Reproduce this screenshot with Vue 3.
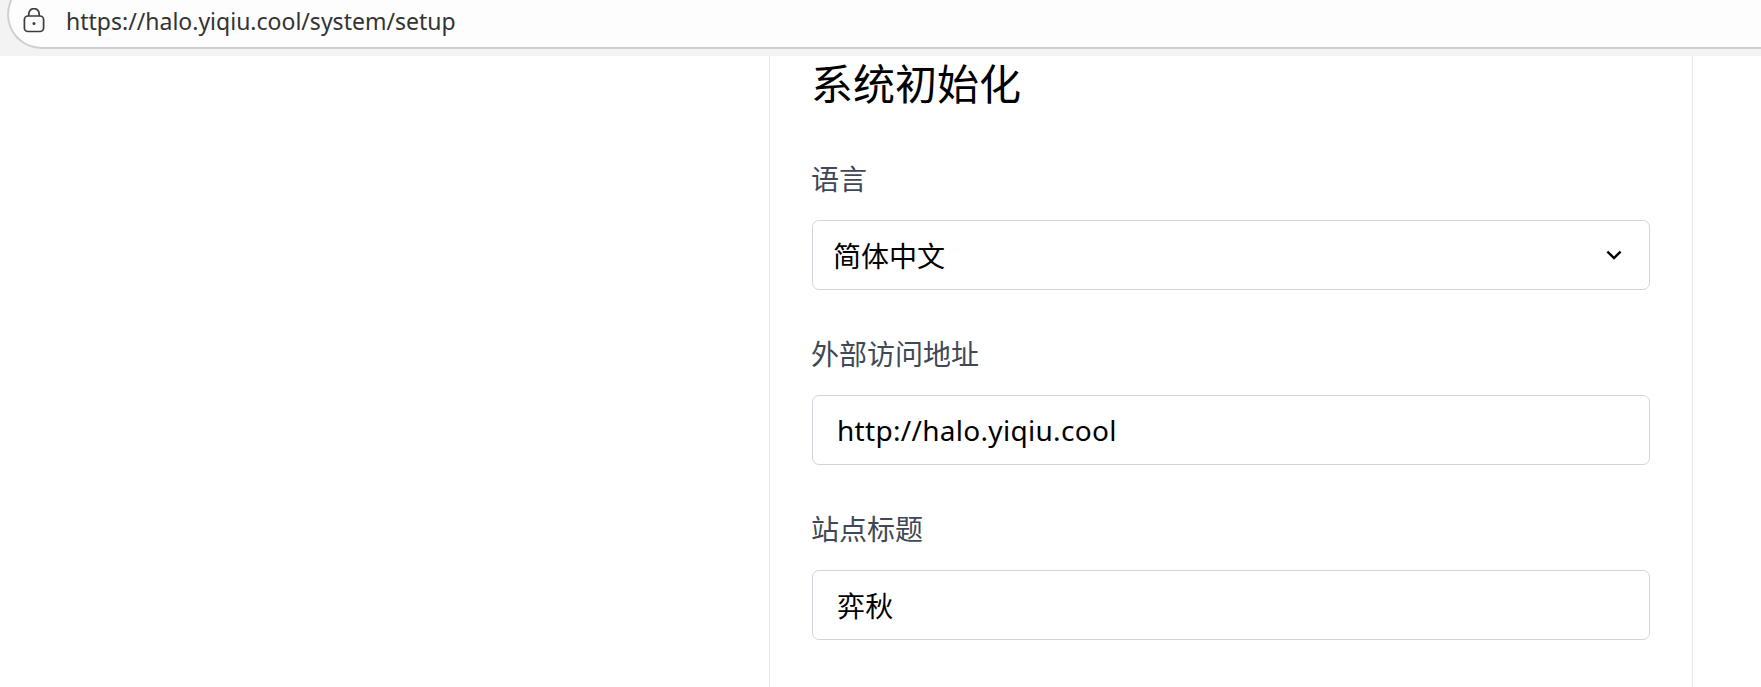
<template>
  <div class="page">
    <!-- Browser address bar -->
    <header class="browser-bar">
      <div class="address-pill">
        <svg class="lock-icon" width="24" height="26" viewBox="0 0 24 26" fill="none" stroke="#3c3c3c" stroke-width="1.7">
          <path d="M6.8 8V5.8a5.2 5.2 0 0 1 10.4 0V8" />
          <rect x="2.4" y="8" width="19.2" height="15.5" rx="3.6" />
          <circle cx="12" cy="15.6" r="1.5" fill="#3c3c3c" stroke="none" />
        </svg>
        <span class="url">https://halo.yiqiu.cool/system/setup</span>
      </div>
    </header>

    <main class="layout">
      <section class="card">
        <h1 class="title">系统初始化</h1>

        <div class="field">
          <label class="label">语言</label>
          <div class="control select-control">
            <span class="value select-value">简体中文</span>
            <svg class="chevron" width="16" height="16" viewBox="0 0 16 16" fill="none" stroke="#000" stroke-width="2.4">
              <path d="M1.4 4.6L8 11 14.6 4.6" />
            </svg>
          </div>
        </div>

        <div v-for="field in fields" :key="field.label" class="field">
          <label class="label">{{ field.label }}</label>
          <div class="control">
            <span class="value">{{ field.value }}</span>
          </div>
        </div>
      </section>
    </main>
  </div>
</template>

<script setup>
const fields = [
  { label: '外部访问地址', value: 'http://halo.yiqiu.cool' },
  { label: '站点标题', value: '弈秋' }
]
</script>

<style scoped>
.page {
  width: 1761px;
  height: 687px;
  overflow: hidden;
  background: #fff;
  font-family: "Noto Sans", "Noto Sans CJK SC", sans-serif;
}

.browser-bar {
  height: 56px;
  box-sizing: border-box;
  padding-left: 7px;
  overflow: hidden;
  background: #f3f3f3;
}

.address-pill {
  display: flex;
  align-items: center;
  box-sizing: border-box;
  height: 69px;
  margin-top: -20px;
  padding: 12px 0 0 13px;
  background: #fdfdfd;
  border: 2px solid #cfcfcf;
  border-right: none;
  border-radius: 35px 0 0 35px;
}

.lock-icon {
  flex: none;
  margin-right: 20px;
}

.url {
  font-size: 23px;
  color: #333;
}

.layout {
  display: grid;
  grid-template-columns: 769px 924px 1fr;
}

.card {
  grid-column: 2;
  height: 631px;
  box-sizing: border-box;
  padding: 0 42px;
  border-left: 1px solid #e5e7eb;
  border-right: 1px solid #e5e7eb;
}

.title {
  margin: 0 0 0 -1px;
  height: 56px;
  font-size: 42px;
  line-height: 56px;
  font-weight: 400;
  color: #000;
}

.field {
  margin-top: 46px;
}

.field + .field {
  margin-top: 43px;
}

.label {
  display: block;
  height: 42px;
  margin-bottom: 20px;
  margin-left: -1px;
  font-size: 28px;
  line-height: 42px;
  color: #3f4856;
}

.control {
  position: relative;
  display: flex;
  align-items: center;
  justify-content: space-between;
  box-sizing: border-box;
  width: 838px;
  height: 70px;
  padding: 0 24px;
  border: 1px solid #d1d5db;
  border-radius: 7px;
}

.value {
  font-size: 28px;
  letter-spacing: 0.3px;
  color: #000;
}

.select-value {
  margin-left: -4px;
  letter-spacing: 0;
}

.chevron {
  margin-right: 3px;
}
</style>

<style>
html, body {
  margin: 0;
  background: #fff;
}
</style>
